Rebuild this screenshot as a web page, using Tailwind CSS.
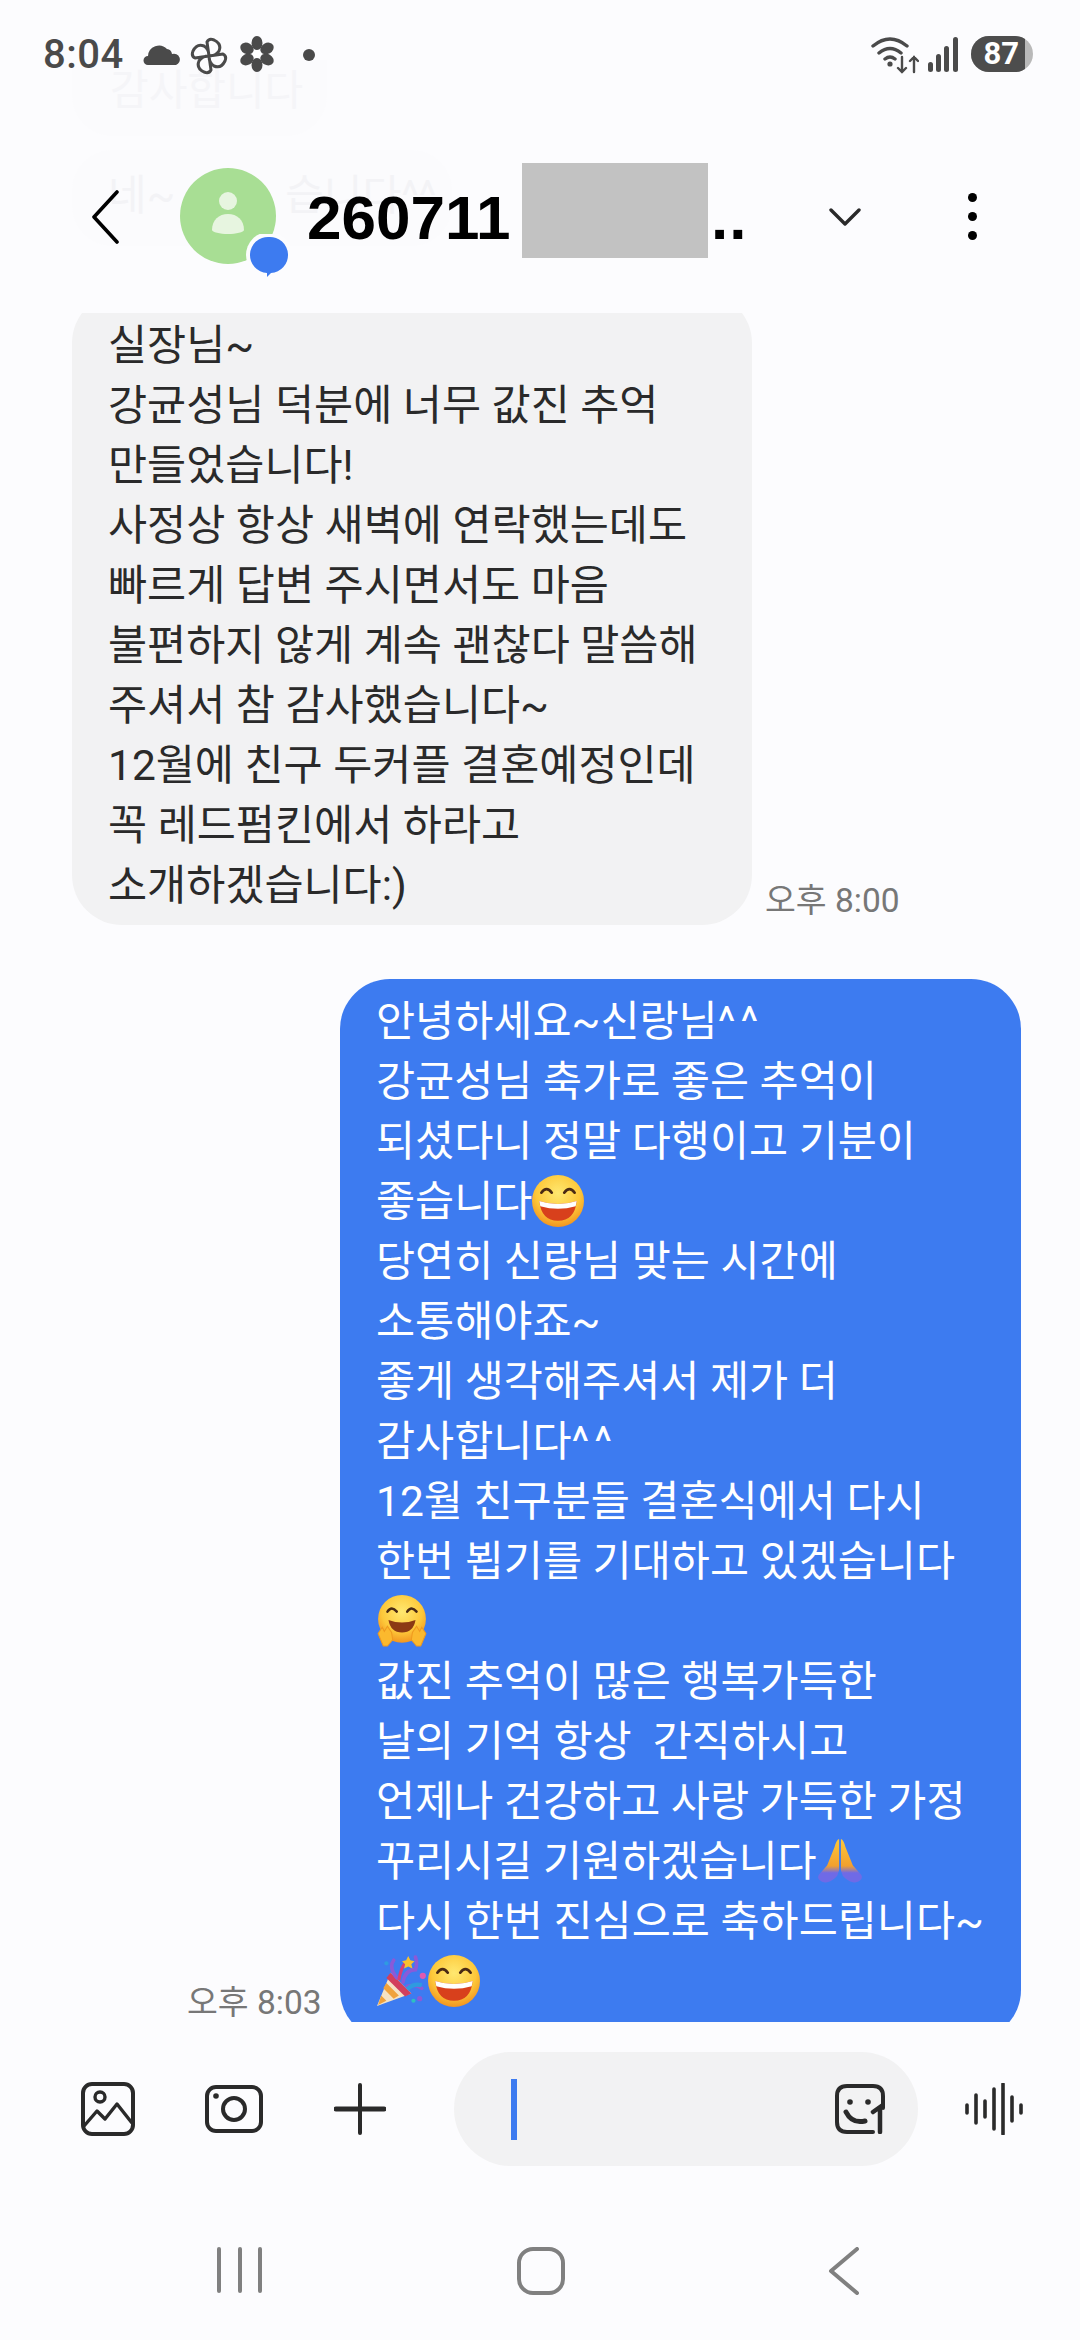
<!DOCTYPE html>
<html lang="ko">
    <head>
        <meta charset="UTF-8">
        <meta name="viewport" content="width=device-width, initial-scale=1.0">
        <title>Messages</title>
        <script src="https://cdn.jsdelivr.net/npm/@tailwindcss/browser@4"></script>
    </head>
    <body class="bg-[#fcfcfe]">
        <!-- Emoji symbols -->
        <svg class="absolute w-0 h-0">
            <defs>
                <radialGradient id="face" cx="50%" cy="35%" r="70%">
                    <stop offset="0%" stop-color="#ffe870"/>
                    <stop offset="60%" stop-color="#fdc83a"/>
                    <stop offset="100%" stop-color="#f08a1a"/>
                </radialGradient>
                <linearGradient id="palm" x1="0" y1="0" x2="0" y2="1">
                    <stop offset="0%" stop-color="#fdc83a"/>
                    <stop offset="62%" stop-color="#f2a02e"/>
                    <stop offset="78%" stop-color="#6f6ae6"/>
                    <stop offset="100%" stop-color="#6f6ae6"/>
                </linearGradient>
            </defs>
            <symbol id="grin" viewBox="0 0 50 50">
                <circle cx="25" cy="25" r="25" fill="url(#face)"/>
                <path d="M9 17q5-7 10 0M31 17q5-7 10 0" fill="none" stroke="#4a2a14" stroke-width="2.6" stroke-linecap="round"/>
                <path d="M7 25q18 6 36 0q-2 19-18 19t-18-19z" fill="#d8401c"/>
                <path d="M7 25q18 6 36 0l-1 5q-17 5-34 0z" fill="#fff"/>
            </symbol>
            <symbol id="hug" viewBox="0 0 50 50">
                <circle cx="25" cy="23" r="23" fill="url(#face)"/>
                <path d="M11 16q4-6 9 0M30 16q4-6 9 0" fill="none" stroke="#4a2a14" stroke-width="2.4" stroke-linecap="round"/>
                <path d="M12 24q13 5 26 0q-2 12-13 12t-13-12z" fill="#8c3a14"/>
                <path d="M2 37l4-6 2 4 3-5 4 6 1 7-5 6H7zM48 37l-4-6-2 4-3-5-4 6-1 7 5 6h4z" fill="#fbb92e" stroke="#ef9a1f" stroke-width="1"/>
            </symbol>
            <symbol id="pray" viewBox="0 0 50 50">
                <path d="M24 1q-3 1-5 9L11 30 2 40q-2 3 1 6 3 3 8 2 6-1 11-7l2-6z" fill="url(#palm)"/>
                <path d="M26 1q3 1 5 9l8 20 9 10q2 3-1 6-3 3-8 2-6-1-11-7l-2-6z" fill="url(#palm)"/>
            </symbol>
            <symbol id="party" viewBox="0 0 50 50">
                <path d="M1 49L14 17l20 20z" fill="#f6e3c4"/>
                <path d="M5 39l5 5-8 4zM10 27l12 12-5 3-10-10z" fill="#f0a23c"/>
                <path d="M14 17l20 20-6 3-18-18z" fill="#d23f5c"/>
                <path d="M20 22q-8-10-3-17M26 26q2-12 12-12 2-6 0-12M30 30q8-2 14 2" fill="none" stroke-width="3.5" stroke-linecap="round" stroke="#8a5ad8"/>
                <path d="M22 24q2-12 6-16" fill="none" stroke="#d83f74" stroke-width="3"/>
                <path d="M30 33q6-6 14-4" fill="none" stroke="#2e9be0" stroke-width="4"/>
                <path d="M31 1l2 4 4 1-3 3 1 4-4-2-4 2 1-4-3-3 4-1z" fill="#f9c22e"/>
                <circle cx="45" cy="20" r="3" fill="#e05ab0"/><circle cx="10" cy="8" r="2" fill="#2e9be0"/><circle cx="42" cy="42" r="2.5" fill="#8a5ad8"/><circle cx="36" cy="44" r="2" fill="#2ec0c0"/>
            </symbol>
        </svg>

        <div class="relative w-[1080px] h-[2340px] overflow-hidden flex flex-col font-['Roboto','Noto_Sans_CJK_KR',sans-serif] text-[#2a2a2a]">

            <!-- Scrolled-away messages showing through the header -->
            <div class="absolute left-[72px] top-[60px] w-[255px] h-[76px] rounded-b-[40px] bg-[#fbfbfd] text-[42px] leading-[62px] text-[#f5f5f8] pl-[38px]">감사합니다</div>
            <div class="absolute left-[72px] top-[150px] w-[380px] h-[96px] rounded-[40px] bg-[#fbfbfd] text-[42px] leading-[60px] text-[#f3f3f6] pl-[36px] pt-[16px] whitespace-nowrap">네~<span class="ml-[110px]">습니다^^</span></div>

            <!-- Status bar -->
            <div class="relative h-[100px] shrink-0 flex items-start pt-[37px] pl-[43px] text-[#4a4a4a]">
                <span class="font-['Roboto',sans-serif] text-[40px] leading-[36px] font-medium tracking-[0.5px] w-[100px]">8:04</span>
                <svg class="w-[38px] h-[24px] mt-[5px]" viewBox="0 0 38 24"><path d="M5 23a4.500 4.500 0 0 1 0-9 11 11 0 0 1 19-7 6 6 0 0 1 5 5 5.500 5.500 0 0 1 4 11z" fill="#4a4a4a"/></svg>
                <svg class="w-[38px] h-[38px] ml-[9px]" viewBox="0 0 38 38" fill="none" stroke="#4a4a4a" stroke-width="3" stroke-linejoin="round"><path d="M19 19L17 5q2-4 7-2 8 4 5 11-3 5-10 5zM19 19l14-2q4 2 2 7-4 8-11 5-5-3-5-10zM19 19l2 14q-2 4-7 2-8-4-5-11 3-5 10-5zM19 19L5 21q-4-2-2-7 4-8 11-5 5 3 5 10z"/></svg>
                <svg class="w-[34px] h-[36px] ml-[12px] -mt-px" viewBox="0 0 34 36" fill="#4a4a4a"><ellipse cx="17" cy="7" rx="5.500" ry="7"/><ellipse cx="17" cy="29" rx="5.500" ry="7"/><ellipse cx="7" cy="12.500" rx="5.500" ry="7" transform="rotate(-60 7 12.500)"/><ellipse cx="27" cy="12.500" rx="5.500" ry="7" transform="rotate(60 27 12.500)"/><ellipse cx="7" cy="23.500" rx="5.500" ry="7" transform="rotate(60 7 23.500)"/><ellipse cx="27" cy="23.500" rx="5.500" ry="7" transform="rotate(-60 27 23.500)"/><circle cx="17" cy="18" r="4" fill="#fff"/></svg>
                <span class="w-[12px] h-[12px] rounded-full bg-[#4a4a4a] ml-[29px] mt-[12px]"></span>
                <div class="ml-auto flex items-start">
                    <svg class="w-[48px] h-[38px]" viewBox="0 0 48 38" fill="none" stroke="#4a4a4a" stroke-linecap="round" stroke-width="3.4"><path d="M2 9q17-14 34 0M8 16q11-9 22 0M14 22q5-4 10 0"/><circle cx="19" cy="27" r="2.6" fill="#4a4a4a" stroke="none"/><path stroke-width="2.4" d="M31 20v15m-4-4l4 4 4-4M43 35V20m-4 4l4-4 4 4"/></svg>
                    <svg class="w-[30px] h-[36px] ml-[9px]" viewBox="0 0 30 36" fill="#4a4a4a"><rect x="0" y="25" width="5" height="10" rx="2.500"/><rect x="8" y="17" width="5" height="18" rx="2.500"/><rect x="16" y="9" width="5" height="26" rx="2.500"/><rect x="25" y="0" width="5" height="35" rx="2.500"/></svg>
                    <div class="w-[62px] h-[36px] ml-[13px] mr-[47px] rounded-full overflow-hidden bg-[#b9b9b9] -mt-px">
                        <div class="w-[54px] h-[36px] bg-[#4d4d4d] text-white font-['Roboto',sans-serif] font-bold text-[31px] leading-[36px] text-right pr-[6px] rounded-r-[3px]">87</div>
                    </div>
                </div>
            </div>

            <!-- Header -->
            <header class="relative h-[213px] shrink-0 flex items-start pt-[68px] pl-[91px]">
                <svg class="w-[28px] h-[54px] mt-[22px]" viewBox="0 0 28 54" fill="none" stroke="#000" stroke-width="3.6" stroke-linecap="round" stroke-linejoin="round"><path d="M26 2L3 27l23 25"/></svg>
                <div class="relative w-[96px] h-[96px] ml-[61px] rounded-full bg-[#a8de94]">
                    <svg class="w-[96px] h-[96px]" viewBox="0 0 96 96" fill="#e7f5e0"><circle cx="48" cy="33" r="9"/><path d="M32 62c0-10 7-16 16-16s16 6 16 16c0 2-8 4-16 4s-16-2-16-4z"/></svg>
                    <svg class="absolute -right-[16px] -bottom-[16px] w-[46px] h-[46px]" viewBox="0 0 46 46"><circle cx="23" cy="21" r="23" fill="#fcfcfe"/><path d="M23 3a18 18 0 0 1 2 36l-4 4v-4A18 18 0 0 1 23 3z" fill="#3d7bf0"/></svg>
                </div>
                <div class="flex items-start ml-[31px] font-['Liberation_Sans',sans-serif] font-bold text-black text-[62px] leading-[60px] mt-[20px]">
                    <span class="w-[215px]">260711</span>
                    <span class="w-[186px] h-[95px] bg-[#c2c2c2] -mt-[25px] shrink-0"></span>
                    <span class="ml-[3px] tracking-[1px] w-[40px]">..</span>
                </div>
                <svg class="w-[32px] h-[18px] ml-[78px] mt-[40px]" viewBox="0 0 32 18" fill="none" stroke="#2a2a2a" stroke-width="3.4" stroke-linecap="round" stroke-linejoin="round"><path d="M2 2l14 14L30 2"/></svg>
                <div class="flex flex-col gap-[10px] ml-[107px] mt-[25px]">
                    <span class="w-[9px] h-[9px] rounded-full bg-black"></span>
                    <span class="w-[9px] h-[9px] rounded-full bg-black"></span>
                    <span class="w-[9px] h-[9px] rounded-full bg-black"></span>
                </div>
            </header>

            <!-- Messages -->
            <main class="relative h-[1709px] shrink-0 overflow-hidden text-[42.5px] leading-[60px]">
                <div class="flex items-end pl-[72px] -mt-[20px]">
                    <div class="w-[680px] h-[632px] bg-[#f2f2f3] rounded-[50px] pl-[36px] pt-[23px] whitespace-nowrap">
                        실장님~<br>
                        강균성님 덕분에 너무 값진 추억<br>
                        만들었습니다!<br>
                        사정상 항상 새벽에 연락했는데도<br>
                        빠르게 답변 주시면서도 마음<br>
                        불편하지 않게 계속 괜찮다 말씀해<br>
                        주셔서 참 감사했습니다~<br>
                        12월에 친구 두커플 결혼예정인데<br>
                        꼭 레드펌킨에서 하라고<br>
                        소개하겠습니다:)
                    </div>
                    <span class="ml-[13px] mb-[2px] text-[33.5px] leading-[44px] text-[#777777] whitespace-nowrap">오후 8:00</span>
                </div>
                <div class="flex items-end mt-[54px] pl-[187px]">
                    <span class="w-[153px] mb-[15px] text-[33.5px] leading-[44px] text-[#777777] whitespace-nowrap">오후 8:03</span>
                    <div class="w-[681px] h-[1061px] bg-[#3d7bf0] text-white rounded-[50px] pl-[36px] pt-[13px] whitespace-nowrap">
                        안녕하세요~신랑님<span class="tracking-[5px]">^^</span><br>
                        강균성님 축가로 좋은 추억이<br>
                        되셨다니 정말 다행이고 기분이<br>
                        좋습니다<svg class="inline-block w-[52px] h-[52px] align-[-11px]"><use href="#grin"/></svg><br>
                        당연히 신랑님 맞는 시간에<br>
                        소통해야죠~<br>
                        좋게 생각해주셔서 제가 더<br>
                        감사합니다<span class="tracking-[5px]">^^</span><br>
                        12월 친구분들 결혼식에서 다시<br>
                        한번 뵙기를 기대하고 있겠습니다<br>
                        <svg class="inline-block w-[52px] h-[52px] align-[-11px]"><use href="#hug"/></svg><br>
                        값진 추억이 많은 행복가득한<br>
                        날의 기억 항상&nbsp; 간직하시고<br>
                        언제나 건강하고 사랑 가득한 가정<br>
                        꾸리시길 기원하겠습니다<svg class="inline-block w-[46px] h-[46px] align-[-8px]"><use href="#pray"/></svg><br>
                        다시 한번 진심으로 축하드립니다~<br>
                        <svg class="inline-block w-[52px] h-[52px] align-[-11px]"><use href="#party"/></svg><svg class="inline-block w-[52px] h-[52px] align-[-11px]"><use href="#grin"/></svg>
                    </div>
                </div>
            </main>

            <!-- Input bar -->
            <div class="h-[174px] shrink-0 flex items-start pt-[30px] pl-[81px]">
                <svg class="w-[54px] h-[54px] mt-[30px]" viewBox="0 0 54 54" fill="none" stroke="#2a2a2a" stroke-width="4" stroke-linejoin="round"><rect x="2" y="2" width="50" height="50" rx="9"/><circle cx="19" cy="15" r="5" stroke-width="3.4"/><path d="M3 44l13-15 8 8 12-15 15 19" stroke-width="3.4"/></svg>
                <svg class="w-[58px] h-[48px] ml-[70px] mt-[33px]" viewBox="0 0 58 48" fill="none" stroke="#2a2a2a" stroke-width="4"><rect x="2" y="2" width="54" height="44" rx="9"/><circle cx="29" cy="24" r="11"/><circle cx="11" cy="11" r="2.8" fill="#2a2a2a" stroke="none"/></svg>
                <svg class="w-[52px] h-[52px] ml-[71px] mt-[31px]" viewBox="0 0 52 52" fill="none" stroke="#2a2a2a" stroke-linecap="round" stroke-width="4"><path d="M26 2v48"/><path d="M2 26h48" stroke-width="5"/></svg>
                <div class="w-[464px] h-[114px] ml-[68px] rounded-full bg-[#f2f2f3] flex items-center pl-[57px] pr-[31px]">
                    <span class="w-[6px] h-[61px] bg-[#3d7bf0]"></span>
                    <svg class="w-[54px] h-[50px] ml-auto" viewBox="0 0 54 50" fill="none" stroke="#2a2a2a" stroke-width="4" stroke-linecap="round"><path d="M50 24V12q0-10-10-10H14Q4 2 4 12v26q0 10 10 10h26"/><circle cx="17" cy="18" r="2.8" fill="#2a2a2a" stroke="none"/><circle cx="35" cy="18" r="2.8" fill="#2a2a2a" stroke="none"/><path d="M13 28q6 12 19 9" stroke-width="5"/><path d="M40 28l7-5v25" stroke-width="4.500"/></svg>
                </div>
                <svg class="w-[60px] h-[52px] ml-[47px] mt-[31px]" viewBox="0 0 60 52" fill="none" stroke="#2a2a2a" stroke-linecap="round" stroke-width="3.6"><path d="M2 22v8M11 12v28M20 18v16M29 6v40M38 1v50M47 14v24M56 22v8"/></svg>
            </div>

            <!-- Navigation bar -->
            <nav class="flex-1 flex items-start pt-[0px] pl-[217px]">
                <div class="flex gap-[16.500px] mt-[51px]">
                    <span class="w-[4px] h-[46px] rounded-full bg-[#808080]"></span>
                    <span class="w-[4px] h-[46px] rounded-full bg-[#808080]"></span>
                    <span class="w-[4px] h-[46px] rounded-full bg-[#808080]"></span>
                </div>
                <span class="w-[48px] h-[48px] ml-[255px] mt-[51px] rounded-[16px] border-[4px] border-[#808080]"></span>
                <svg class="w-[32px] h-[48px] ml-[263px] mt-[51px]" viewBox="0 0 32 48" fill="none" stroke="#808080" stroke-width="4" stroke-linecap="round" stroke-linejoin="round"><path d="M29 2L3 24l26 22"/></svg>
            </nav>
        </div>
    </body>
</html>
